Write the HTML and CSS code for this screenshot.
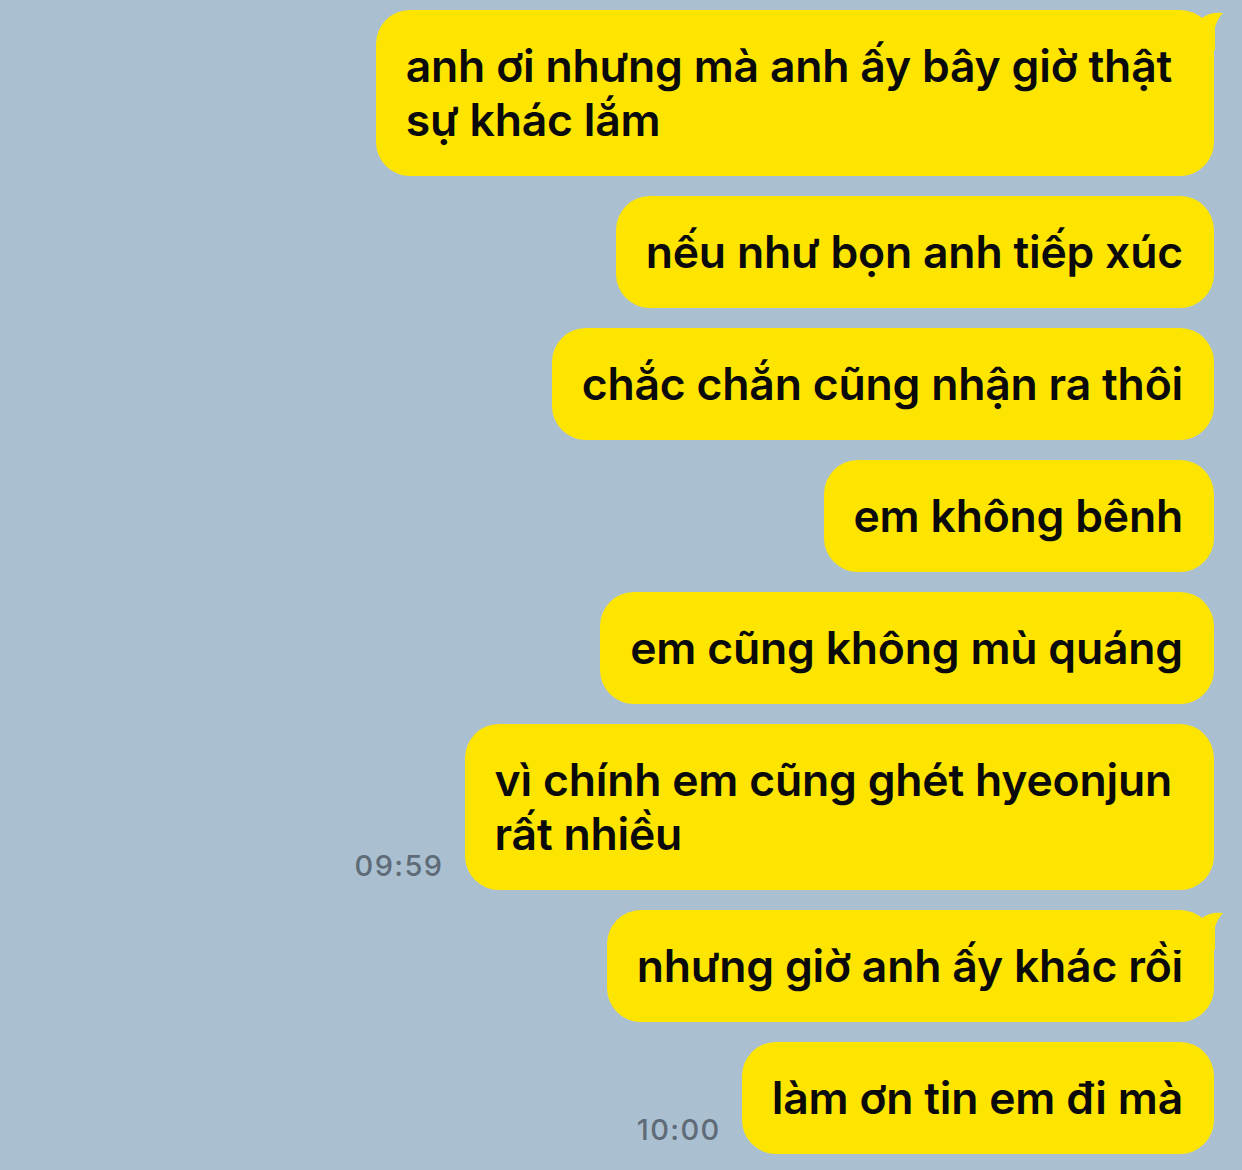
FILE: index.html
```html
<!DOCTYPE html>
<html>
<head>
<meta charset="UTF-8">
<link rel="stylesheet" href="styles.css">
</head>
<body>
<div class="chat">

<div class="row">
  <div class="bubble wide">anh ơi nhưng mà anh ấy bây giờ thật<br>sự khác lắm
    <svg class="tail" width="50" height="40" viewBox="0 0 50 40"><path d="M0,12 Q18,2 28,8 Q36,2 49,3 Q44,8 41,17 V40 H0 Z" fill="#fee500"/></svg>
  </div>
</div>
<div class="row"><div class="bubble">nếu như bọn anh tiếp xúc</div></div>
<div class="row"><div class="bubble">chắc chắn cũng nhận ra thôi</div></div>
<div class="row"><div class="bubble">em không bênh</div></div>
<div class="row"><div class="bubble">em cũng không mù quáng</div></div>
<div class="row">
  <span class="time">09:59</span>
  <div class="bubble wide">vì chính em cũng ghét hyeonjun<br>rất nhiều</div>
</div>
<div class="row">
  <div class="bubble">nhưng giờ anh ấy khác rồi
    <svg class="tail" width="50" height="40" viewBox="0 0 50 40"><path d="M0,12 Q18,2 28,8 Q36,2 49,3 Q44,8 41,17 V40 H0 Z" fill="#fee500"/></svg>
  </div>
</div>
<div class="row">
  <span class="time">10:00</span>
  <div class="bubble">làm ơn tin em đi mà</div>
</div>

</div>
</body>
</html>
```
FILE: styles.css
```css
html,body{margin:0;padding:0}
body{background:#aac0d1;font-family:Inter,"Noto Sans",sans-serif;width:1242px;height:1170px;overflow:hidden}
.chat{display:flex;flex-direction:column;gap:20px;padding:10px 28px 0 0}
.row{display:flex;justify-content:flex-end;align-items:flex-end;gap:21px}
.bubble{position:relative;background:#fee500;color:#0a0a0a;font-size:44.5px;font-weight:600;line-height:54px;padding:29px 31px 29px 30px;border-radius:34px;letter-spacing:-0.2px;white-space:nowrap}
.wide{padding-right:42px}
.tail{position:absolute;top:0;right:-10px;display:block}
.time{font-size:29px;color:#5f6b77;font-weight:500;line-height:34px;margin-bottom:7px;letter-spacing:1.4px}
```
